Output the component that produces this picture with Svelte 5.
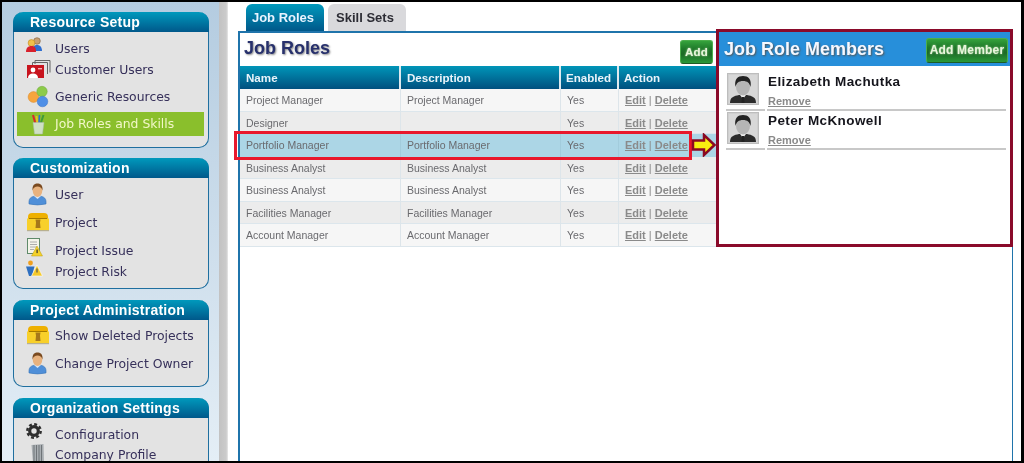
<script>
  const panels = [
    { title: 'Resource Setup', pad: 11, items: [
      { label: 'Users', icon: 'users', gap: 7 },
      { label: 'Customer Users', icon: 'customers', gap: 1 },
      { label: 'Generic Resources', icon: 'generic', gap: 7 },
      { label: 'Job Roles and Skills', icon: 'cup', gap: 5, active: true }
    ]},
    { title: 'Customization', pad: 6, items: [
      { label: 'User', icon: 'user', gap: 7 },
      { label: 'Project', icon: 'box', gap: 8 },
      { label: 'Project Issue', icon: 'issue', gap: 8 },
      { label: 'Project Risk', icon: 'risk', gap: 1 }
    ]},
    { title: 'Project Administration', pad: 12, items: [
      { label: 'Show Deleted Projects', icon: 'box', gap: 6 },
      { label: 'Change Project Owner', icon: 'user', gap: 8 }
    ]},
    { title: 'Organization Settings', pad: 10, items: [
      { label: 'Configuration', icon: 'gear', gap: 7 },
      { label: 'Company Profile', icon: 'bin', gap: 0 }
    ]}
  ];
  const roles = [
    ['Project Manager', 'Project Manager'],
    ['Designer', ''],
    ['Portfolio Manager', 'Portfolio Manager'],
    ['Business Analyst', 'Business Analyst'],
    ['Business Analyst', 'Business Analyst'],
    ['Facilities Manager', 'Facilities Manager'],
    ['Account Manager', 'Account Manager']
  ];
  const members = ['Elizabeth Machutka', 'Peter McKnowell'];
</script>

{#snippet icon(name)}
  <svg class="ico" viewBox="0 0 24 24" width="24" height="24" aria-hidden="true">
    {#if name === 'users'}
      <circle cx="11" cy="4" r="3.300" fill="#c8a070" stroke="#7a5a3a" stroke-width=".6"/>
      <path d="M6 14c0-4 2-6 5-6s5 2 5 6z" fill="#2f6fd0"/>
      <circle cx="5.500" cy="6" r="3.400" fill="#f2c04a" stroke="#c08a20" stroke-width=".6"/>
      <path d="M0 15c0-4 2-6 5.500-6S10 11 10 15z" fill="#d8212c"/>
    {:else if name === 'customers'}
      <g fill="none" stroke="#666" stroke-width="1"><path d="M9 6V2.500h15v12"/><path d="M6.500 7V4.500h15V16"/></g>
      <rect x="1" y="7" width="17" height="13" fill="#c8141e"/>
      <circle cx="7" cy="12" r="2.400" fill="#fff"/>
      <path d="M2 20c0-3 2-4.500 5-4.500s5 1.500 5 4.500z" fill="#fff"/>
      <rect x="12" y="10" width="4" height="1.400" fill="#f3b0b0"/>
    {:else if name === 'generic'}
      <circle cx="7.500" cy="12" r="5.400" fill="#f7a53c" stroke="#d8892a" stroke-width=".5"/>
      <circle cx="16" cy="6.500" r="5.200" fill="#8ccb4a" stroke="#6ca735" stroke-width=".5"/>
      <circle cx="16.500" cy="16.500" r="5.300" fill="#4f8fe6" stroke="#3a74c4" stroke-width=".5"/>
    {:else if name === 'cup'}
      <path d="M7 3l2.500 9" stroke="#d9282c" stroke-width="2"/>
      <path d="M10.500 4l1 8" stroke="#e8c020" stroke-width="2"/>
      <path d="M17.500 3l-3 9" stroke="#3f9a3a" stroke-width="2"/>
      <path d="M13.500 3l-.5 9" stroke="#2f6fd0" stroke-width="1.600"/>
      <path d="M7 10.500h11l-1.500 11.500h-8z" fill="#cfe0c4" stroke="#a9b8a9" stroke-width=".5"/>
    {:else if name === 'user'}
      <path d="M3 21c-.5-5 1-8 8.500-8s9 3 8.500 8q-8.500 2-17 0z" fill="#4f8fd8" stroke="#2f6cb0" stroke-width=".5"/>
      <path d="M8 13l3.500 3 3.500-3z" fill="#d6e6f6"/>
      <ellipse cx="11.500" cy="7.500" rx="4.800" ry="6.500" fill="#e8b27e"/>
      <path d="M6.500 7.500C6 1.500 9 .5 11.500 .5s5.500 1 5 7c-1-3-2.500-4-5-4s-4 1-5 4z" fill="#7a4a20"/>
    {:else if name === 'box'}
      <path d="M2 6q0-4 4-4h12q4 0 4 4v2H2z" fill="#eeb000"/>
      <rect x="1" y="7.500" width="22" height="11.500" fill="#f8d02a"/>
      <rect x="1" y="19" width="22" height="1.200" fill="#b8b090"/>
      <rect x="3" y="7" width="18" height="1" fill="#a67c00"/>
      <path d="M9.500 8.500h5l-.5 3 .5 5.500h-5l.5-5.500z" fill="#a6781a"/>
    {:else if name === 'issue'}
      <g transform="translate(0,-1)">
        <rect x="1.500" y=".5" width="12" height="15" fill="#f4f4ea" stroke="#5f8a6a"/>
        <path d="M4 4h7M4 6.500h7M4 9h7M4 11.500h4" stroke="#999" stroke-width=".8"/>
        <path d="M11 8l5.500 10H5.500z" fill="#f5d22a" stroke="#b89a10" stroke-width=".5"/>
        <rect x="10.500" y="11.500" width="1.200" height="3.600" fill="#333"/>
      </g>
    {:else if name === 'risk'}
      <circle cx="4.500" cy="3" r="2.400" fill="#f0a01e"/>
      <path d="M0 6.500h8.500L6 16H3z" fill="#2f6fc0"/>
      <path d="M11 5l5.500 11H5.500z" fill="#f5c92a" stroke="#fff" stroke-width=".6"/>
      <rect x="10.400" y="8.500" width="1.200" height="4" fill="#555"/>
    {:else if name === 'gear'}
      <circle cx="8" cy="8" r="4.300" fill="none" stroke="#2e2e2e" stroke-width="3.200"/>
      <circle cx="8" cy="8" r="6.700" fill="none" stroke="#2e2e2e" stroke-width="2.400" stroke-dasharray="2.900 2.360"/>
    {:else if name === 'bin'}
      <path d="M5.500 2l12-1 .5 19H7z" fill="#a9aeb2"/>
      <path d="M8 2v18M10.500 2v18M13 2v18M15.500 2v18" stroke="#6f7478" stroke-width="1"/>
    {/if}
  </svg>
{/snippet}

{#snippet avatar()}
  <svg class="avatar" viewBox="0 0 32 32" width="32" height="32" aria-hidden="true">
    <rect x=".5" y=".5" width="31" height="31" fill="#cfcfcf" stroke="#bdbdbd"/>
    <rect x="2" y="2" width="28" height="28" fill="#d8d8d8"/>
    <path d="M3 30c0-6 4-7 9-8h8c5 1 9 2 9 8z" fill="#2c2c2c"/>
    <path d="M13 22l3 4 3-4z" fill="#eee"/>
    <path d="M15 24h2l.5 6h-3z" fill="#222"/>
    <ellipse cx="16" cy="14" rx="7" ry="8.500" fill="#b5b5b5"/>
    <path d="M8.500 14C7 6 11 3 16 3s9 3 7.500 11c-1-4-3-6-7.500-6s-6.500 2-7.500 6z" fill="#222"/>
  </svg>
{/snippet}

<div class="frame">
  <aside class="sidebar">
    {#each panels as p}
      <section class="panel" style="padding-bottom:{p.pad}px">
        <h3>{p.title}</h3>
        {#each p.items as it}
          <a class="item" class:active={it.active} style="margin-top:{it.gap}px">
            <span class="icon-cell">{@render icon(it.icon)}</span>
            <span class="label">{it.label}</span>
          </a>
        {/each}
      </section>
    {/each}
  </aside>
  <div class="splitter"></div>
  <main class="main">
    <nav class="tabs">
      <span class="tab on">Job Roles</span>
      <span class="tab">Skill Sets</span>
    </nav>
    <div class="content">
      <div class="roles">
        <div class="titlebar">
          <h2>Job Roles</h2>
          <button class="btn">Add</button>
        </div>
        <div class="table">
          <div class="row head">
            <div>Name</div><div>Description</div><div>Enabled</div><div>Action</div>
          </div>
          {#each roles as r, i}
            <div class="row body" class:alt={i % 2 === 1} class:sel={i === 2}>
              <div>{r[0]}</div>
              <div>{r[1]}</div>
              <div>Yes</div>
              <div class="acts"><u>Edit</u> <i>|</i> <u>Delete</u></div>
            </div>
          {/each}
          <div class="mark"></div>
          <svg class="arrow" viewBox="0 0 26 24" width="26" height="24" aria-hidden="true">
            <path d="M2 7.500H13V2L23.500 12 13 22V16.500H2z" fill="#f8ee10" stroke="#8a0a22" stroke-width="2.500"/>
          </svg>
        </div>
      </div>
      <div class="members">
        <div class="mhead">
          <h2>Job Role Members</h2>
          <button class="btn wide">Add Member</button>
        </div>
        <div class="mlist">
          {#each members as m}
            <div class="member">
              <div class="mpic">{@render avatar()}</div>
              <div class="minfo">
                <strong>{m}</strong>
                <u>Remove</u>
              </div>
            </div>
          {/each}
        </div>
      </div>
    </div>
  </main>
</div>

<style>
  :global(body) { margin: 0; background: #000; }
  .frame {
    box-sizing: border-box;
    width: 1024px;
    height: 463px;
    border: solid #000;
    border-width: 2px 3px 2px 2px;
    display: flex;
    overflow: hidden;
    background: #fff;
    font-family: "Liberation Sans", Arial, sans-serif;
    filter: blur(.35px);
  }
  .sidebar {
    flex: none;
    width: 217px;
    box-sizing: border-box;
    padding: 10px 0 0 11px;
    background: linear-gradient(#b4cce0, #e4eef6);
    overflow: hidden;
  }
  .panel {
    box-sizing: border-box;
    width: 196px;
    margin-bottom: 11px;
    background: #e3e3e3;
    border: 1px solid #1f6f9f;
    border-top: 0;
    border-radius: 10px;
  }
  .panel:first-child { margin-bottom: 10px; }
  .panel h3 {
    margin: 0 -1px;
    height: 20px;
    padding-left: 17px;
    border-radius: 10px 10px 0 0;
    background: linear-gradient(#0099bc, #00588a);
    color: #fff;
    font-size: 14px;
    line-height: 20px;
    font-weight: 700;
    letter-spacing: .25px;
  }
  .item {
    display: flex;
    align-items: center;
    height: 20px;
    margin-left: 3px;
    margin-right: 4px;
    font-family: "DejaVu Sans", Verdana, sans-serif;
    font-size: 12.4px;
    color: #36305a;
  }
  .label { margin-bottom: 2px; }
  .item.active {
    height: 24px;
    background: #8abf2c;
    color: #f2f7c8;
  }
  .icon-cell {
    flex: none;
    width: 38px;
    height: 20px;
    position: relative;
  }
  .ico { position: absolute; left: 9px; top: -2px; overflow: visible; }
  .splitter {
    flex: none;
    width: 9px;
    background: linear-gradient(90deg, #c2c2c2, #cbcbcb 80%, #e8e8e8);
  }
  .main {
    flex: 1;
    min-width: 0;
    display: flex;
    flex-direction: column;
    padding: 2px 8px 0 10px;
  }
  .tabs {
    display: flex;
    gap: 4px;
    padding-left: 8px;
    height: 27px;
    flex: none;
  }
  .tab {
    width: 78px;
    box-sizing: border-box;
    padding-right: 4px;
    border-radius: 6px 6px 0 0;
    background: #d9d9dc;
    color: #2c2c34;
    font-size: 13px;
    font-weight: 700;
    text-align: center;
    line-height: 28px;
  }
  .tab.on {
    background: linear-gradient(#0099bc, #00588a);
    color: #e8f4ff;
  }
  .content {
    flex: 1;
    display: flex;
    border: 2px solid #1f74ab;
    border-width: 2px 1px 0 2px;
    min-height: 0;
  }
  .roles { flex: none; width: 476px; }
  .titlebar {
    height: 33px;
    display: flex;
    align-items: center;
    justify-content: space-between;
    padding: 0 3px 0 4px;
  }
  h2 {
    margin: 0;
    font-size: 18px;
    font-weight: 700;
  }
  .titlebar h2 {
    color: #27306c;
    text-shadow: 1px 1px 2px #888;
    margin-bottom: 2px;
  }
  .btn {
    height: 24px;
    width: 33px;
    padding: 0;
    border: 1px solid #4cae4c;
    border-bottom-color: #1d5c24;
    border-radius: 3px;
    background: linear-gradient(#35a33c 0, #1f7a2a 35%, #1c6a26 60%, #2a9a38);
    color: #e8f5dc;
    font: 700 11.5px "Liberation Sans", Arial, sans-serif;
    letter-spacing: .2px;
    text-shadow: 0 0 2px #bfe6b0;
  }
  .titlebar .btn { margin-top: 4px; }
  .btn.wide { width: 82px; font-size: 12px; letter-spacing: .2px; }
  .table { position: relative; }
  .row {
    display: grid;
    grid-template-columns: 161px 160px 58px 97px;
  }
  .head {
    height: 23px;
    background: linear-gradient(#0095b8, #00507f);
    color: #eaf4fa;
    font-size: 11.6px;
    font-weight: 700;
    line-height: 23px;
  }
  .head > div {
    padding-left: 6px;
    border-right: 2px solid #dfe9ef;
    box-sizing: border-box;
  }
  .head > div:nth-child(3) { padding-left: 5px; }
  .head > div:last-child { border-right: 0; padding-left: 5px; }
  .body {
    height: 22.57px;
    box-sizing: border-box;
    background: #f6f6f6;
    border-bottom: 1px solid #dce6ec;
    color: #6a6a6e;
    font-size: 10.5px;
    line-height: 23px;
  }
  .body > div {
    padding-left: 6px;
    border-right: 1px solid #dde5ea;
    box-sizing: border-box;
    white-space: nowrap;
  }
  .body > div:last-child { border-right: 0; }
  .body.alt { background: #ececec; }
  .body.sel { background: #acd6e6; border-bottom-color: #acd6e6; }
  .body.sel > div { border-right-color: #a2ccdc; }
  .acts { color: #8a8a8a; font-weight: 700; font-size: 11px; }
  .acts i { font-style: normal; font-weight: 400; }
  .mark {
    position: absolute;
    left: -6px;
    top: 65px;
    width: 458px;
    height: 29px;
    box-sizing: border-box;
    border: 3px solid #e8182c;
    pointer-events: none;
  }
  .arrow { position: absolute; left: 451px; top: 67px; }
  .members {
    flex: none;
    width: 297px;
    height: 218px;
    margin: -4px -1px 0 0;
    box-sizing: border-box;
    border: 3px solid #8a0a2a;
    background: #fff;
    position: relative;
  }
  .mhead {
    height: 34px;
    background: #278fda;
    display: flex;
    align-items: center;
    justify-content: space-between;
    padding: 0 2px 0 5px;
  }
  .mhead h2 { color: #f4f8ff; text-shadow: 1px 1px 2px #555; }
  .mhead .btn { height: 25px; margin-top: 2px; }
  .mlist { padding: 7px 4px 0 7px; }
  .member { display: flex; height: 39px; box-sizing: border-box; }
  .mpic {
    width: 39px;
    margin-right: 2px;
    padding-left: 1px;
    box-sizing: border-box;
    border-bottom: 2px solid #c8c8c8;
    height: 38px;
  }
  .avatar { display: block; }
  .minfo {
    flex: 1;
    height: 38px;
    box-sizing: border-box;
    border-bottom: 2px solid #c8c8c8;
    padding-left: 1px;
    display: flex;
    flex-direction: column;
  }
  .minfo strong {
    font-size: 13.5px;
    line-height: 16px;
    margin-top: 1px;
    color: #15151c;
    letter-spacing: .4px;
  }
  .minfo u {
    font-size: 11px;
    font-weight: 700;
    color: #8a8a8a;
    margin-top: 5px;
    line-height: 13px;
  }
</style>
